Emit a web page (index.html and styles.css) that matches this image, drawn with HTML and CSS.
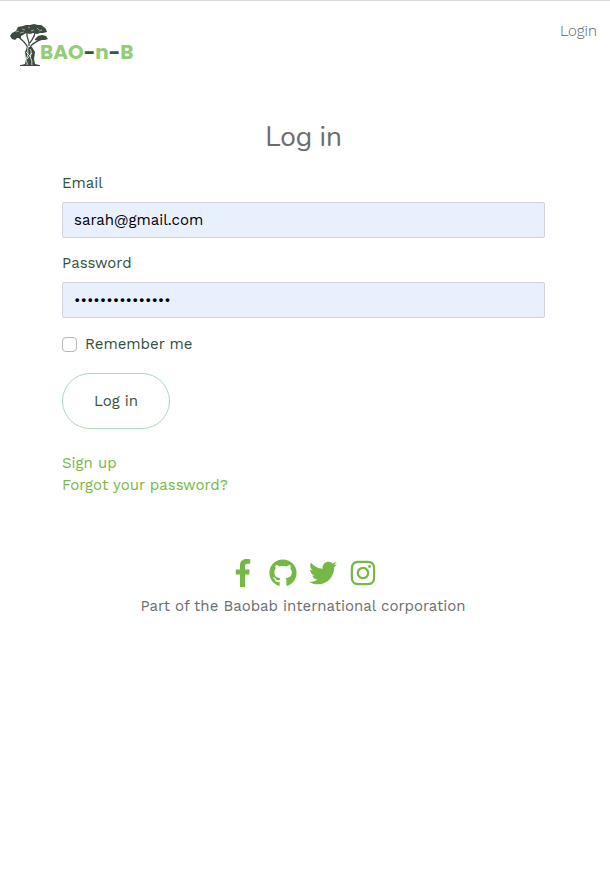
FILE: index.html
```html
<!DOCTYPE html>
<html lang="en">
<head>
<meta charset="utf-8">
<meta name="viewport" content="width=device-width, initial-scale=1">
<title>Log in - BAO-n-B</title>
<link rel="stylesheet" href="styles.css">
</head>
<body>
<header class="navbar">
  <a class="brand" href="#">
    <svg class="brand-tree" viewBox="0 0 38 42" aria-hidden="true">
      <g fill="#3c4a40">
        <path d="M0 12l2-3 4-2 2-4 5-1 3-1 4 0 4-1 4 1 3 0 3 2 2 2 1 3-4 1-3 0-3 1-4-1-3 1-4-1-3 2-2 1 0 2-4 0-2 2-3-1z"/>
        <path d="M25 15l3-3 4-1 4 1 2 3-3 1-3 0-3 1-4-1z"/>
        <path d="M11 41l4-1 1-5-1-7 2-5 5 0 3 5-1 7 1 5 4 1z"/>
        <path d="M10 41h20v1H10z"/>
      </g>
      <path fill="none" stroke="#3c4a40" stroke-width="1.300" d="M18 25C17 19 12 17 8 12M20 25c0-6 7-6 10-10M19 22c1-6-3-8-2-13M20 19c2-4 5-6 5-11"/>
      <path fill="none" stroke="#fff" stroke-width=".8" d="M18 23c-1 4 1 6-1 10s1 5 0 8M20 25c3 4-1 7 1 10s0 4 1 6M16 28l5 5M22 29l-5 6"/>
      <path fill="none" stroke="#fff" stroke-width=".5" d="M6 8l3-1M12 5l3 1M18 3l2 1M21 7l3-1M27 4l2 2M10 9l4-1M29 7l3-1"/>
    </svg>
    <span class="brand-name">BAO<b>-</b>n<b>-</b>B</span>
  </a>
  <a class="nav-link" href="#">Login</a>
</header>
<main class="content">
  <h1 class="title">Log in</h1>
  <form class="login-form">
    <div class="field">
      <label for="email">Email</label>
      <input class="control" id="email" type="email" value="sarah@gmail.com">
    </div>
    <div class="field">
      <label for="password">Password</label>
      <input class="control" id="password" type="password" value="baobabtree12345">
    </div>
    <div class="check">
      <input id="remember" type="checkbox">
      <label for="remember">Remember me</label>
    </div>
    <button class="submit" type="submit">Log in</button>
  </form>
  <nav class="links">
    <a href="#">Sign up</a>
    <a href="#">Forgot your password?</a>
  </nav>
</main>
<footer class="footer">
  <div class="social">
    <a href="#" aria-label="Facebook"><svg viewBox="0 0 264 512"><path d="M76.7 512V283H0v-91h76.7v-71.7C76.7 42.4 124.3 0 193.8 0c33.3 0 61.9 2.5 70.2 3.6V85h-48.2c-37.8 0-45.1 18-45.1 44.3V192H256l-11.7 91h-73.6v229"/></svg></a>
    <a href="#" aria-label="GitHub"><svg viewBox="0 0 496 512"><path d="M244.800 8C106.100 8 0 113.300 0 252c0 110.900 69.800 205.800 169.500 239.200 12.800 2.300 17.300-5.600 17.300-12.100 0-6.200-.3-40.400-.3-61.400 0 0-70 15-84.700-29.800 0 0-11.400-29.100-27.800-36.600 0 0-22.900-15.700 1.600-15.400 0 0 24.900 2 38.600 25.800 21.900 38.600 58.600 27.500 72.900 20.900 2.300-16 8.800-27.100 16-33.700-55.900-6.200-112.300-14.300-112.300-110.500 0-27.500 7.600-41.300 23.600-58.900-2.600-6.500-11.100-33.300 2.600-67.900 20.900-6.500 69 27 69 27 20-5.600 41.500-8.500 62.800-8.500s42.800 2.900 62.800 8.500c0 0 48.100-33.600 69-27 13.700 34.700 5.200 61.400 2.600 67.900 16 17.700 25.800 31.500 25.800 58.900 0 96.500-58.900 104.200-114.800 110.500 9.200 7.900 17 22.900 17 46.400 0 33.700-.3 75.400-.3 83.600 0 6.500 4.600 14.400 17.300 12.100C428.200 457.800 496 362.900 496 252 496 113.300 383.500 8 244.800 8z"/></svg></a>
    <a href="#" aria-label="Twitter"><svg viewBox="0 0 512 512"><path d="M459.370 151.716c.325 4.548.325 9.097.325 13.645 0 138.720-105.583 298.558-298.558 298.558-59.452 0-114.680-17.219-161.137-47.106 8.447.974 16.568 1.299 25.340 1.299 49.055 0 94.213-16.568 130.274-44.832-46.132-.975-84.792-31.188-98.112-72.772 6.498.974 12.995 1.624 19.818 1.624 9.421 0 18.843-1.300 27.614-3.573-48.081-9.747-84.143-51.980-84.143-102.985v-1.299c13.969 7.797 30.214 12.670 47.431 13.319-28.264-18.843-46.781-51.005-46.781-87.391 0-19.492 5.197-37.360 14.294-52.954 51.655 63.675 129.300 105.258 216.365 109.807-1.624-7.797-2.599-15.918-2.599-24.040 0-57.828 46.782-104.934 104.934-104.934 30.213 0 57.502 12.670 76.670 33.137 23.715-4.548 46.456-13.320 66.599-25.340-7.798 24.366-24.366 44.833-46.132 57.827 21.117-2.273 41.584-8.122 60.426-16.243-14.292 20.791-32.161 39.308-52.628 54.253z"/></svg></a>
    <a href="#" aria-label="Instagram"><svg viewBox="0 0 448 512"><path d="M224.100 141c-63.600 0-114.900 51.300-114.900 114.900s51.300 114.900 114.900 114.900S339 319.500 339 255.900 287.700 141 224.100 141zm0 189.600c-41.100 0-74.700-33.500-74.700-74.700s33.500-74.700 74.700-74.700 74.700 33.500 74.700 74.700-33.600 74.700-74.700 74.700zm146.400-194.300c0 14.900-12 26.800-26.800 26.800-14.900 0-26.800-12-26.800-26.800s12-26.800 26.800-26.800 26.800 12 26.800 26.800zm76.100 27.200c-1.700-35.900-9.900-67.700-36.200-93.900-26.200-26.200-58-34.400-93.900-36.200-37-2.100-147.900-2.100-184.900 0-35.800 1.700-67.600 9.900-93.900 36.100s-34.400 58-36.200 93.900c-2.100 37-2.100 147.900 0 184.900 1.700 35.900 9.900 67.700 36.200 93.900s58 34.400 93.900 36.200c37 2.100 147.900 2.100 184.900 0 35.900-1.700 67.700-9.900 93.900-36.200 26.200-26.200 34.400-58 36.200-93.900 2.100-37 2.100-147.800 0-184.800zM398.800 388c-7.800 19.600-22.900 34.700-42.600 42.600-29.500 11.700-99.500 9-132.100 9s-102.700 2.600-132.100-9c-19.600-7.800-34.700-22.900-42.600-42.600-11.700-29.500-9-99.500-9-132.100s-2.600-102.700 9-132.100c7.800-19.600 22.900-34.700 42.600-42.600 29.500-11.700 99.500-9 132.100-9s102.700-2.600 132.100 9c19.600 7.800 34.700 22.900 42.600 42.600 11.700 29.500 9 99.500 9 132.100s2.700 102.700-9 132.100z"/></svg></a>
  </div>
  <p class="footer-text">Part of the Baobab international corporation</p>
</footer>
</body>
</html>
```
FILE: styles.css
```css
* { box-sizing: border-box; }
body {
  margin: 0;
  border-top: 1px solid #d9d9d9;
  background: #fff;
  color: #34503f;
  font: 15px/22px "Work Sans", Inter, "Liberation Sans", sans-serif;
}
a { color: #75b846; text-decoration: none; }
.navbar {
  display: flex;
  justify-content: space-between;
  align-items: flex-start;
  padding: 19px 13px 0 10px;
}
.brand { display: flex; align-items: flex-end; padding-top: 4px; }
.brand-tree { width: 38px; height: 42px; }
.brand-name {
  margin-left: -8px;
  padding-bottom: 2px;
  color: #93cd74;
  font: 700 20px/24px Poppins, Montserrat, Nunito, Lato, sans-serif;
}
.brand-name b { color: #2f5a40; font-weight: 700; }
.nav-link { color: #606060; font-weight: 300; }
.content { padding: 53px 65px 0 62px; }
.title {
  margin: 0 0 17px;
  color: #6b6d6f;
  font: 400 28px/36px Nunito, "Open Sans", sans-serif;
  text-align: center;
}
.field { margin-bottom: 14px; }
.field label { display: block; margin-bottom: 8px; }
.control {
  display: block;
  width: 100%;
  height: 36px;
  padding: 6px 11px;
  border: 1px solid #ced4da;
  border-radius: 2px;
  background: #e8f0fe;
  color: #000;
  font: inherit;
}
.check { display: flex; align-items: center; gap: 8px; padding-top: 1px; }
.check input {
  appearance: none;
  width: 15px;
  height: 15px;
  margin: 0;
  border: 1px solid #b8b8b8;
  border-radius: 4px;
  background: #fff;
}
.check input:checked { background: #75b846; }
.submit {
  margin-top: 18px;
  padding: 16px 31px;
  border: 1px solid #acd8b8;
  border-radius: 28px;
  background: #fff;
  color: #34503f;
  font: inherit;
}
.links {
  display: flex;
  flex-direction: column;
  align-items: flex-start;
  margin-top: 23px;
}
.footer { padding: 63px 4px 0 0; text-align: center; }
.social { display: flex; justify-content: center; gap: 12px; }
.social svg { display: block; width: 28px; height: 28px; fill: #75b846; }
.footer-text { margin: 8px 0 0; color: #6b6d6f; }
```
